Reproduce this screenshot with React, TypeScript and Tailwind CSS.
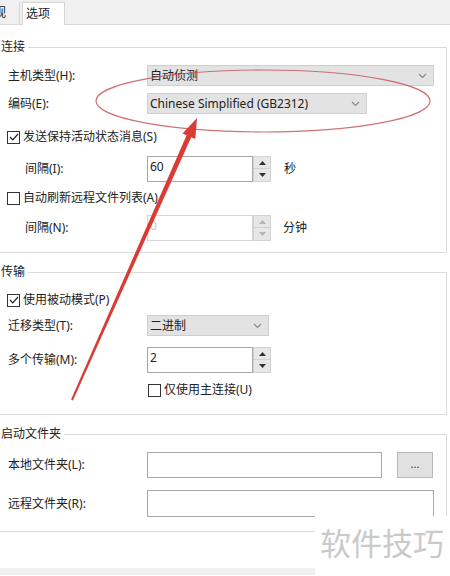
const font = "font-['Segoe_UI','Noto_Sans','Noto_Sans_CJK_SC',sans-serif]";

function Chevron() {
  return (
    <svg width="9" height="6" viewBox="0 0 9 6" className="shrink-0">
      <polyline points="1,1 4.5,4.5 8,1" fill="none" stroke="#8a8a8a" strokeWidth="1.2" />
    </svg>
  );
}

function Select({ value, width }: { value: string; width: string }) {
  return (
    <div className={`${width} h-[21px] bg-[#e3e3e3] border border-[#cfcfcf] flex items-center justify-between pl-[2px] pr-[6px]`}>
      <span className="text-[12px] text-[#222] leading-none">{value}</span>
      <Chevron />
    </div>
  );
}

function Spinner({ disabled }: { disabled?: boolean }) {
  const c = disabled ? "#b5b5b5" : "#333";
  return (
    <div className="w-[18px] h-[26px] flex flex-col">
      <div className="h-[13px] bg-[#e7e7e7] border border-[#d2d2d2] flex items-center justify-center">
        <svg width="7" height="4" viewBox="0 0 7 4"><polygon points="0,4 3.5,0 7,4" fill={c} /></svg>
      </div>
      <div className="h-[13px] bg-[#e7e7e7] border border-t-0 border-[#d2d2d2] flex items-center justify-center">
        <svg width="7" height="4" viewBox="0 0 7 4"><polygon points="0,0 3.5,4 7,0" fill={c} /></svg>
      </div>
    </div>
  );
}

function NumInput({ value, disabled }: { value: string; disabled?: boolean }) {
  return (
    <div className="flex">
      <div className={`w-[106px] h-[26px] bg-white border ${disabled ? "border-[#d6d6d6] text-[#c8c8c8]" : "border-[#a8a8a8] text-[#222]"} text-[12px] pl-[2px] pt-[2px] leading-[16px]`}>
        {value}
      </div>
      <Spinner disabled={disabled} />
    </div>
  );
}

function Check({ checked, label }: { checked?: boolean; label: string }) {
  return (
    <div className="flex items-center gap-[3px] h-[16px]">
      <div className="w-[13px] h-[13px] border border-[#333] bg-white flex items-center justify-center">
        {checked && (
          <svg width="10" height="8" viewBox="0 0 10 8">
            <polyline points="1,4 3.8,6.8 9,1" fill="none" stroke="#222" strokeWidth="1.2" />
          </svg>
        )}
      </div>
      <span className="text-[12px] text-[#222] leading-none">{label}</span>
    </div>
  );
}

function Label({ text, indent }: { text: string; indent?: boolean }) {
  return (
    <div className={`w-[154px] shrink-0 ${indent ? "pl-[32px]" : "pl-[15px]"} text-[12px] text-[#222] leading-none`}>
      {text}
    </div>
  );
}

function GroupHeader({ title }: { title: string }) {
  return (
    <div className="-mt-[8px] h-[14px] flex items-center">
      <span className="bg-white pl-[8px] pr-[3px] text-[12px] text-[#222] leading-none">{title}</span>
    </div>
  );
}

export default function App() {
  return (
    <div className={`relative w-[450px] h-[576px] overflow-hidden bg-white ${font}`}>
      {/* tabs */}
      <div className="h-[25px] bg-[#f0f0f0] border-b border-[#dadada] flex items-end">
        <div className="w-[20px] h-[22px] border-r border-[#d6d6d6] overflow-hidden flex items-center">
          <span className="-ml-[6px] text-[12px] text-[#222] leading-none">视</span>
        </div>
        <div className="ml-[2px] w-[43px] h-[23px] -mb-px bg-white border border-b-0 border-[#d6d6d6] flex items-center pl-[3px]">
          <span className="text-[12px] text-[#222] leading-none">选项</span>
        </div>
      </div>

      {/* 连接 */}
      <div className="mt-[22px] -ml-[8px] mr-[3px] border border-[#dcdcdc]">
        <GroupHeader title="连接" />
        <div className="mt-[11px] h-[21px] flex items-center">
          <Label text="主机类型(H):" />
          <Select value="自动侦测" width="w-[287px]" />
        </div>
        <div className="mt-[7px] h-[21px] flex items-center">
          <Label text="编码(E):" />
          <Select value="Chinese Simplified (GB2312)" width="w-[220px]" />
        </div>
        <div className="mt-[15px] pl-[14px]">
          <Check checked label="发送保持活动状态消息(S)" />
        </div>
        <div className="mt-[11px] h-[26px] flex items-center">
          <Label text="间隔(I):" indent />
          <NumInput value="60" />
          <span className="ml-[13px] text-[12px] text-[#222] leading-none">秒</span>
        </div>
        <div className="mt-[8px] pl-[14px]">
          <Check label="自动刷新远程文件列表(A)" />
        </div>
        <div className="mt-[9px] h-[26px] flex items-center mb-[11px]">
          <Label text="间隔(N):" indent />
          <NumInput value="0" disabled />
          <span className="ml-[12px] text-[12px] text-[#222] leading-none">分钟</span>
        </div>
      </div>

      {/* 传输 */}
      <div className="mt-[19px] -ml-[8px] mr-[3px] border border-[#dcdcdc]">
        <GroupHeader title="传输" />
        <div className="mt-[13px] pl-[14px]">
          <Check checked label="使用被动模式(P)" />
        </div>
        <div className="mt-[7px] h-[21px] flex items-center">
          <Label text="迁移类型(T):" />
          <Select value="二进制" width="w-[122px]" />
        </div>
        <div className="mt-[11px] h-[26px] flex items-center">
          <Label text="多个传输(M):" />
          <NumInput value="2" />
        </div>
        <div className="mt-[9px] pl-[155px] mb-[16px]">
          <Check label="仅使用主连接(U)" />
        </div>
      </div>

      {/* 启动文件夹 */}
      <div className="mt-[19px] -ml-[8px] mr-[3px] border border-[#dcdcdc]">
        <GroupHeader title="启动文件夹" />
        <div className="mt-[11px] h-[26px] flex items-center">
          <Label text="本地文件夹(L):" />
          <div className="w-[235px] h-[26px] bg-white border border-[#a8a8a8]" />
          <div className="ml-[15px] w-[36px] h-[26px] bg-[#e1e1e1] border border-[#b8b8b8] flex items-center justify-center text-[11px] text-[#333] leading-none pb-[4px]">
            ...
          </div>
        </div>
        <div className="mt-[12px] h-[27px] flex items-center mb-[14px]">
          <Label text="远程文件夹(R):" />
          <div className="w-[287px] h-[27px] bg-white border border-[#a8a8a8]" />
        </div>
      </div>

      <div className="mt-[36px] h-[7px] bg-[#f0f0f0]" />

      {/* annotations */}
      <svg className="absolute inset-0 pointer-events-none" width="450" height="576" viewBox="0 0 450 576">
        <ellipse cx="263" cy="101" rx="167" ry="31" fill="none" stroke="#c9595a" strokeWidth="1.2" opacity="0.85" />
        <polygon
          points="71.1,399.6 186.6,135.3 182.5,133.5 197,118 195.3,139.1 191.2,137.3 72.9,400.4"
          fill="#db3b35"
        />
      </svg>

      {/* watermark */}
      <div className="absolute right-0 bottom-0 w-[135px] h-[60px] bg-white flex items-center pl-[5px] pb-[10px]">
        <span className="text-[31px] text-[#cacaca] leading-none font-['Noto_Sans_CJK_SC',sans-serif]">软件技巧</span>
      </div>
    </div>
  );
}
